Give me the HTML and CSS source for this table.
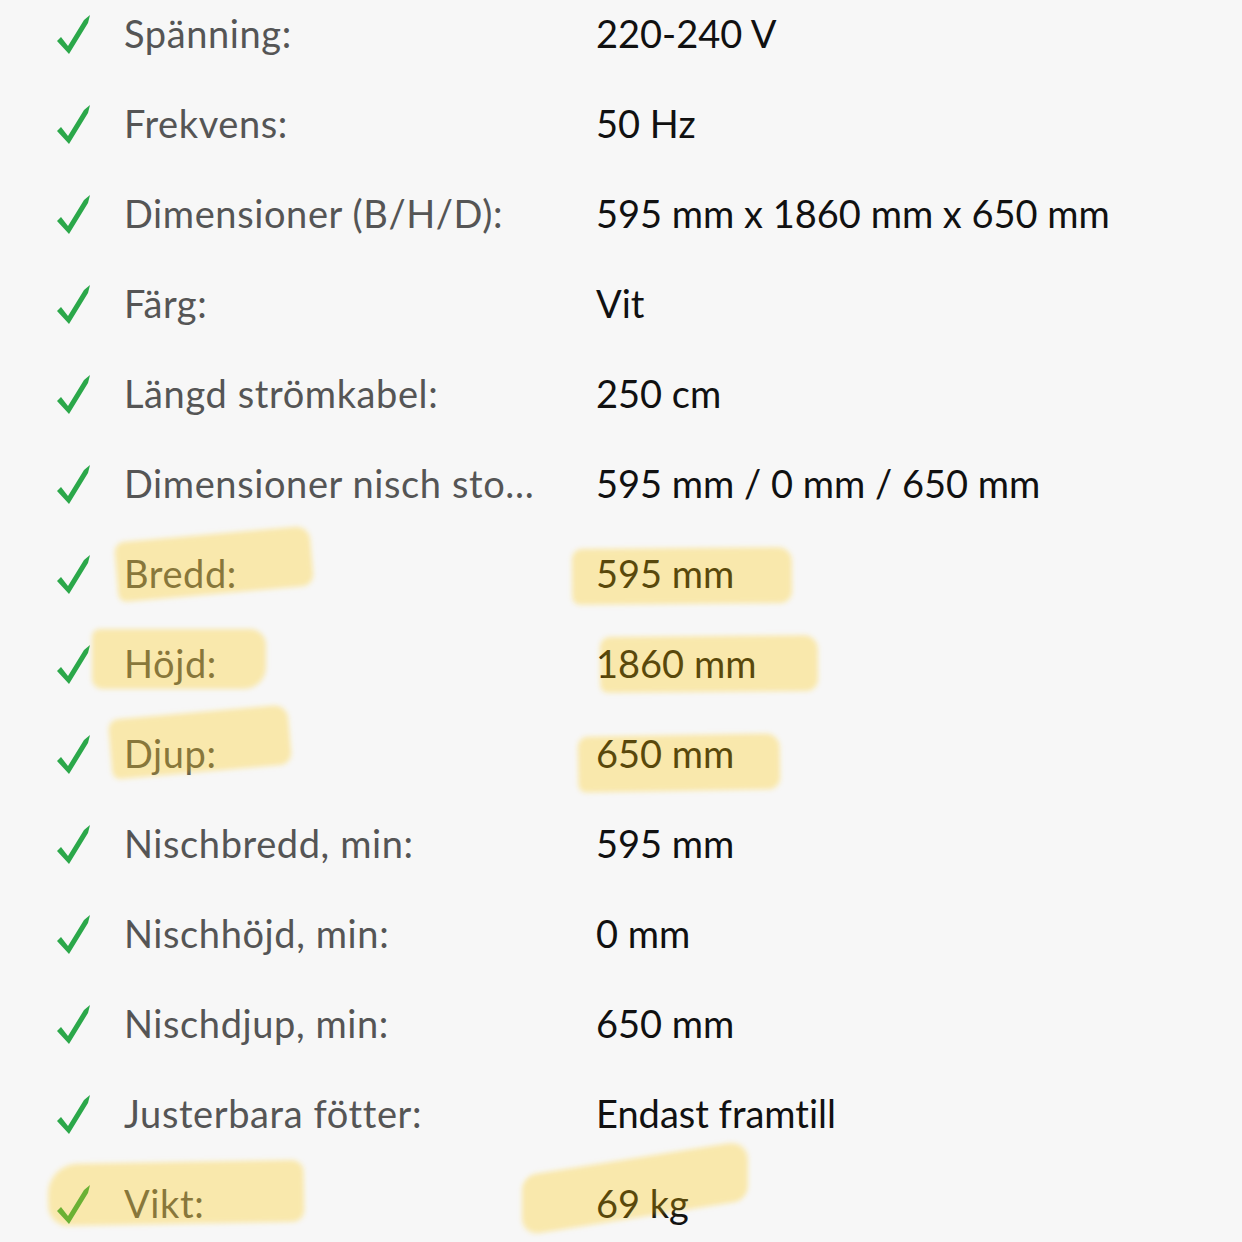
FILE: index.html
```html
<!DOCTYPE html>
<html lang="sv">
<head>
<meta charset="utf-8">
<title>Specifikationer</title>
<link rel="stylesheet" href="styles.css">
</head>
<body>
<div class="page">
  <div class="specs">
    <div class="row"><svg class="check" viewBox="0 0 36 40"><polygon points="1,27 5,23 12,32 28,6 34,1 32,9 13,40"/></svg><span class="label">Spänning:</span><span class="value">220-240 V</span></div>
    <div class="row"><svg class="check" viewBox="0 0 36 40"><polygon points="1,27 5,23 12,32 28,6 34,1 32,9 13,40"/></svg><span class="label">Frekvens:</span><span class="value">50 Hz</span></div>
    <div class="row"><svg class="check" viewBox="0 0 36 40"><polygon points="1,27 5,23 12,32 28,6 34,1 32,9 13,40"/></svg><span class="label">Dimensioner (B/H/D):</span><span class="value">595 mm x 1860 mm x 650 mm</span></div>
    <div class="row"><svg class="check" viewBox="0 0 36 40"><polygon points="1,27 5,23 12,32 28,6 34,1 32,9 13,40"/></svg><span class="label">Färg:</span><span class="value">Vit</span></div>
    <div class="row"><svg class="check" viewBox="0 0 36 40"><polygon points="1,27 5,23 12,32 28,6 34,1 32,9 13,40"/></svg><span class="label">Längd strömkabel:</span><span class="value">250 cm</span></div>
    <div class="row"><svg class="check" viewBox="0 0 36 40"><polygon points="1,27 5,23 12,32 28,6 34,1 32,9 13,40"/></svg><span class="label">Dimensioner nisch storlek (B/H/D):</span><span class="value">595 mm / 0 mm / 650 mm</span></div>
    <div class="row"><svg class="check" viewBox="0 0 36 40"><polygon points="1,27 5,23 12,32 28,6 34,1 32,9 13,40"/></svg><span class="label">Bredd:</span><span class="value">595 mm</span></div>
    <div class="row"><svg class="check" viewBox="0 0 36 40"><polygon points="1,27 5,23 12,32 28,6 34,1 32,9 13,40"/></svg><span class="label">Höjd:</span><span class="value">1860 mm</span></div>
    <div class="row"><svg class="check" viewBox="0 0 36 40"><polygon points="1,27 5,23 12,32 28,6 34,1 32,9 13,40"/></svg><span class="label">Djup:</span><span class="value">650 mm</span></div>
    <div class="row"><svg class="check" viewBox="0 0 36 40"><polygon points="1,27 5,23 12,32 28,6 34,1 32,9 13,40"/></svg><span class="label">Nischbredd, min:</span><span class="value">595 mm</span></div>
    <div class="row"><svg class="check" viewBox="0 0 36 40"><polygon points="1,27 5,23 12,32 28,6 34,1 32,9 13,40"/></svg><span class="label">Nischhöjd, min:</span><span class="value">0 mm</span></div>
    <div class="row"><svg class="check" viewBox="0 0 36 40"><polygon points="1,27 5,23 12,32 28,6 34,1 32,9 13,40"/></svg><span class="label">Nischdjup, min:</span><span class="value">650 mm</span></div>
    <div class="row"><svg class="check" viewBox="0 0 36 40"><polygon points="1,27 5,23 12,32 28,6 34,1 32,9 13,40"/></svg><span class="label">Justerbara fötter:</span><span class="value">Endast framtill</span></div>
    <div class="row"><svg class="check" viewBox="0 0 36 40"><polygon points="1,27 5,23 12,32 28,6 34,1 32,9 13,40"/></svg><span class="label">Vikt:</span><span class="value">69 kg</span></div>
  </div>
  <div class="hl hl-bredd-l"></div>
  <div class="hl hl-bredd-v"></div>
  <div class="hl hl-hojd-l"></div>
  <div class="hl hl-hojd-v"></div>
  <div class="hl hl-djup-l"></div>
  <div class="hl hl-djup-v"></div>
  <div class="hl hl-vikt-l"></div>
  <div class="hl hl-vikt-v"></div>
</div>
</body>
</html>
```
FILE: styles.css
```css
html, body {
  margin: 0;
  padding: 0;
  background: #f7f7f7;
}
body {
  width: 1242px;
  height: 1242px;
  overflow: hidden;
  font-family: Lato, "Liberation Sans", sans-serif;
  font-variant-ligatures: none;
}
.page {
  position: relative;
  width: 1242px;
  height: 1242px;
  overflow: hidden;
}
.specs {
  margin-top: -11px;
  display: flex;
  flex-direction: column;
}
.row {
  display: flex;
  align-items: center;
  height: 90px;
  padding-left: 56px;
  font-size: 38px;
  line-height: 1.2;
}
.check {
  flex: 0 0 36px;
  width: 36px;
  height: 40px;
  fill: #2ba84a;
  margin-right: 32px;
}
.label {
  flex: 0 0 420px;
  width: 420px;
  margin-right: 52px;
  color: #555555;
  letter-spacing: 0.6px;
  white-space: nowrap;
  overflow: hidden;
  text-overflow: ellipsis;
}
.value {
  color: #111111;
  white-space: nowrap;
}
.hl {
  position: absolute;
  background: rgba(255, 200, 0, 0.3);
  filter: blur(2.5px);
  border-radius: 10px 14px 12px 8px;
}
.hl-bredd-l { left: 116px; top: 534px; width: 196px; height: 60px; transform: rotate(-5deg); }
.hl-bredd-v { left: 572px; top: 548px; width: 220px; height: 56px; transform: rotate(-0.5deg); }
.hl-hojd-l { left: 92px; top: 629px; width: 174px; height: 60px; border-radius: 8px 16px 22px 10px; }
.hl-hojd-v { left: 600px; top: 636px; width: 218px; height: 56px; transform: rotate(-0.5deg); }
.hl-djup-l { left: 110px; top: 712px; width: 180px; height: 60px; transform: rotate(-5deg); }
.hl-djup-v { left: 578px; top: 735px; width: 202px; height: 56px; transform: rotate(-1deg); }
.hl-vikt-l { left: 48px; top: 1162px; width: 256px; height: 62px; border-radius: 30px 12px 12px 20px; transform: rotate(-1deg); }
.hl-vikt-v { left: 522px; top: 1158px; width: 226px; height: 60px; border-radius: 14px 20px 14px 18px; transform: skewY(-9deg); }
```
